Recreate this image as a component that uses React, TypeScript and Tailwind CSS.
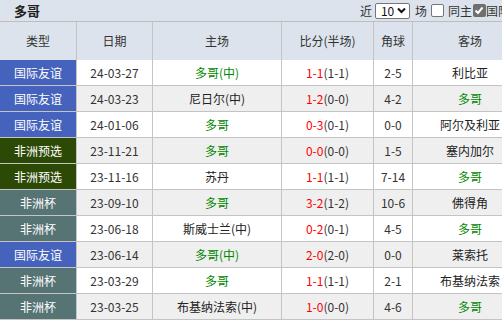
import React from 'react';

type Row = {
  type: string;
  date: string;
  home: string;
  homeTogo: boolean;
  score: string;
  half: string;
  corner: string;
  away: string;
  awayTogo: boolean;
};

const ROWS: Row[] = [
  { type: '国际友谊', date: '24-03-27', home: '多哥(中)', homeTogo: true, score: '1-1', half: '(1-1)', corner: '2-5', away: '利比亚', awayTogo: false },
  { type: '国际友谊', date: '24-03-23', home: '尼日尔(中)', homeTogo: false, score: '1-2', half: '(0-0)', corner: '4-2', away: '多哥', awayTogo: true },
  { type: '国际友谊', date: '24-01-06', home: '多哥', homeTogo: true, score: '0-3', half: '(0-1)', corner: '0-0', away: '阿尔及利亚', awayTogo: false },
  { type: '非洲预选', date: '23-11-21', home: '多哥', homeTogo: true, score: '0-0', half: '(0-0)', corner: '1-5', away: '塞内加尔', awayTogo: false },
  { type: '非洲预选', date: '23-11-16', home: '苏丹', homeTogo: false, score: '1-1', half: '(1-1)', corner: '7-14', away: '多哥', awayTogo: true },
  { type: '非洲杯', date: '23-09-10', home: '多哥', homeTogo: true, score: '3-2', half: '(1-2)', corner: '10-6', away: '佛得角', awayTogo: false },
  { type: '非洲杯', date: '23-06-18', home: '斯威士兰(中)', homeTogo: false, score: '0-2', half: '(0-1)', corner: '4-5', away: '多哥', awayTogo: true },
  { type: '国际友谊', date: '23-06-14', home: '多哥(中)', homeTogo: true, score: '2-0', half: '(2-0)', corner: '0-0', away: '莱索托', awayTogo: false },
  { type: '非洲杯', date: '23-03-29', home: '多哥', homeTogo: true, score: '1-1', half: '(1-1)', corner: '2-1', away: '布基纳法索', awayTogo: false },
  { type: '非洲杯', date: '23-03-25', home: '布基纳法索(中)', homeTogo: false, score: '1-0', half: '(0-0)', corner: '4-6', away: '多哥', awayTogo: true },
];

const TYPE_BG: Record<string, string> = {
  国际友谊: 'bg-[#4563bd]',
  非洲预选: 'bg-[#2c4a06]',
  非洲杯: 'bg-[#567474]',
};

const COLS = 'grid grid-cols-[77px_76px_129px_92px_39px_115px]';
const CELL = 'flex items-center justify-center border-r border-[#c4c4c4]';

export default function App() {
  return (
    <div
      className="w-[528px] h-[320px] overflow-hidden bg-white text-[12px] text-[#333]"
      style={{ fontFamily: '"Noto Sans CJK SC", "Noto Sans", sans-serif' }}
    >
      {/* Title bar */}
      <div className="flex h-[22px] items-center justify-between bg-[#dce3ec] border-b border-[#bdbdbd]">
        <span className="pl-[14px] text-[13px] font-bold text-[#222]">多哥</span>
        <div className="flex items-center pr-[18px] text-[12px] text-[#333]">
          <span>近</span>
          <div className="ml-[3px] flex h-[16px] w-[35px] items-center justify-between rounded-[2px] border border-[#767676] bg-white pl-[5px] pr-[3px] text-[12px] leading-none text-[#111]">
            <span>10</span>
            <svg width="9" height="7" viewBox="0 0 9 7">
              <path d="M1 1.5 L4.5 5 L8 1.5" stroke="#111" strokeWidth="2" fill="none" />
            </svg>
          </div>
          <span className="ml-[5px]">场</span>
          <span className="ml-[4px] h-[13px] w-[13px] rounded-[2px] border border-[#767676] bg-white" />
          <span className="ml-[4px]">同主</span>
          <span className="ml-[1px] flex h-[13px] w-[13px] items-center justify-center rounded-[2px] bg-[#6f6f6f]">
            <svg width="10" height="9" viewBox="0 0 10 9">
              <path d="M1.5 4.5 L4 7 L8.5 1.5" stroke="#fff" strokeWidth="2" fill="none" />
            </svg>
          </span>
          <span>国际</span>
        </div>
      </div>

      {/* Header row */}
      <div className={`${COLS} h-[38px] bg-[#dce3ec] text-[#333]`}>
        <div className={CELL}>类型</div>
        <div className={CELL}>日期</div>
        <div className={CELL}>主场</div>
        <div className={CELL}>比分(半场)</div>
        <div className={CELL}>角球</div>
        <div className={CELL}>客场</div>
      </div>

      {/* Data rows */}
      {ROWS.map((r, i) => (
        <div
          key={i}
          className={`${COLS} h-[26px] border-b border-[#c4c4c4] ${i % 2 === 1 ? 'bg-[#efefef]' : 'bg-white'}`}
        >
          <div className={`${CELL} ${TYPE_BG[r.type]} text-white`}>{r.type}</div>
          <div className={CELL}>{r.date}</div>
          <div className={`${CELL} ${r.homeTogo ? 'text-[#008800]' : 'text-[#222]'}`}>{r.home}</div>
          <div className={CELL}>
            <span className="text-[#ff0000]">{r.score}</span>
            <span>{r.half}</span>
          </div>
          <div className={CELL}>{r.corner}</div>
          <div className={`${CELL} ${r.awayTogo ? 'text-[#008800]' : 'text-[#222]'}`}>{r.away}</div>
        </div>
      ))}
    </div>
  );
}
